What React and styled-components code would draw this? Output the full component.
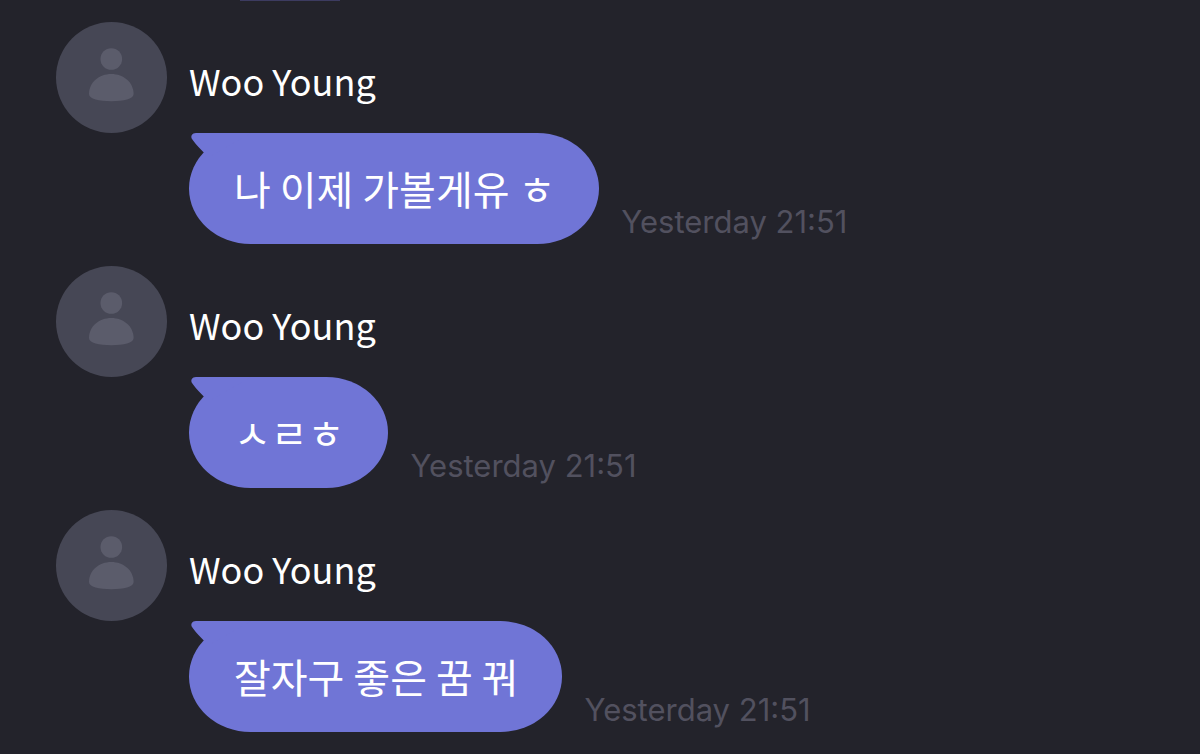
import React from "react";
import styled, { createGlobalStyle } from "styled-components";

const GlobalStyle = createGlobalStyle`
  * { box-sizing: border-box; }
  html, body { margin: 0; background: #23232b; }
`;

const Chat = styled.main`
  min-height: 100vh;
  padding-bottom: 22px;
  background: #23232b;
  color: #fff;
  font-family: "Noto Sans CJK KR", sans-serif;
`;

const PreviousBubbleEdge = styled.div`
  width: 100px;
  height: 1px;
  margin-left: 240px;
  background: #3c3b60;
`;

const MessageList = styled.ul`
  display: flex;
  flex-direction: column;
  gap: 22px;
  margin: 0;
  padding: 21px 56px 0;
  list-style: none;
`;

const Message = styled.li`
  display: grid;
  grid-template-columns: 111px 1fr;
  grid-template-rows: 111px auto;
  column-gap: 22px;
`;

const Avatar = styled.div`
  width: 111px;
  height: 111px;
  border-radius: 50%;
  background: #464755;
`;

const Name = styled.div`
  padding-top: 31px;
  font-size: 36px;
  line-height: 54px;
  white-space: nowrap;
`;

const MessageBody = styled.div`
  grid-column: 2;
  display: flex;
  align-items: flex-end;
  gap: 22px;
`;

const Bubble = styled.p`
  position: relative;
  margin: 0;
  padding: 25px 44px 26px 45px;
  border-radius: 62px / 56px;
  background: #7075d6;
  font-size: 40px;
  line-height: 60px;
  white-space: nowrap;
`;

const Tail = styled.svg`
  position: absolute;
  top: 0;
  left: 0;
`;

const Time = styled.time`
  padding-bottom: 2px;
  color: #52515f;
  font-family: Inter, sans-serif;
  font-size: 31px;
  line-height: 40px;
  white-space: nowrap;
`;

const messages = [
  { name: "Woo Young", text: "나 이제 가볼게유 ㅎ", time: "Yesterday 21:51" },
  { name: "Woo Young", text: "ㅅㄹㅎ", time: "Yesterday 21:51" },
  { name: "Woo Young", text: "잘자구 좋은 꿈 꿔", time: "Yesterday 21:51" },
];

function PersonIcon() {
  return (
    <svg width="111" height="111" viewBox="0 0 111 111" fill="#5b5c6b" aria-hidden="true">
      <circle cx="55.3" cy="37" r="10.8" />
      <path d="M33 72C33 60.5 43 52 55.3 52S77.6 60.5 77.6 72C77.6 77 67.5 79.2 55.3 79.2S33 77 33 72Z" />
    </svg>
  );
}

export default function App() {
  return (
    <>
      <GlobalStyle />
      <Chat>
        <PreviousBubbleEdge />
        <MessageList>
          {messages.map((message, index) => (
            <Message key={index}>
              <Avatar>
                <PersonIcon />
              </Avatar>
              <Name>{message.name}</Name>
              <MessageBody>
                <Bubble>
                  <Tail width="62" height="24" viewBox="0 0 62 24" fill="#7075d6" aria-hidden="true">
                    <path d="M62 0H7C3 0 1.2 3.4 3.2 6.2C5.2 9.5 10.5 15 14.8 19.5L20 24Z" />
                  </Tail>
                  {message.text}
                </Bubble>
                <Time>{message.time}</Time>
              </MessageBody>
            </Message>
          ))}
        </MessageList>
      </Chat>
    </>
  );
}
